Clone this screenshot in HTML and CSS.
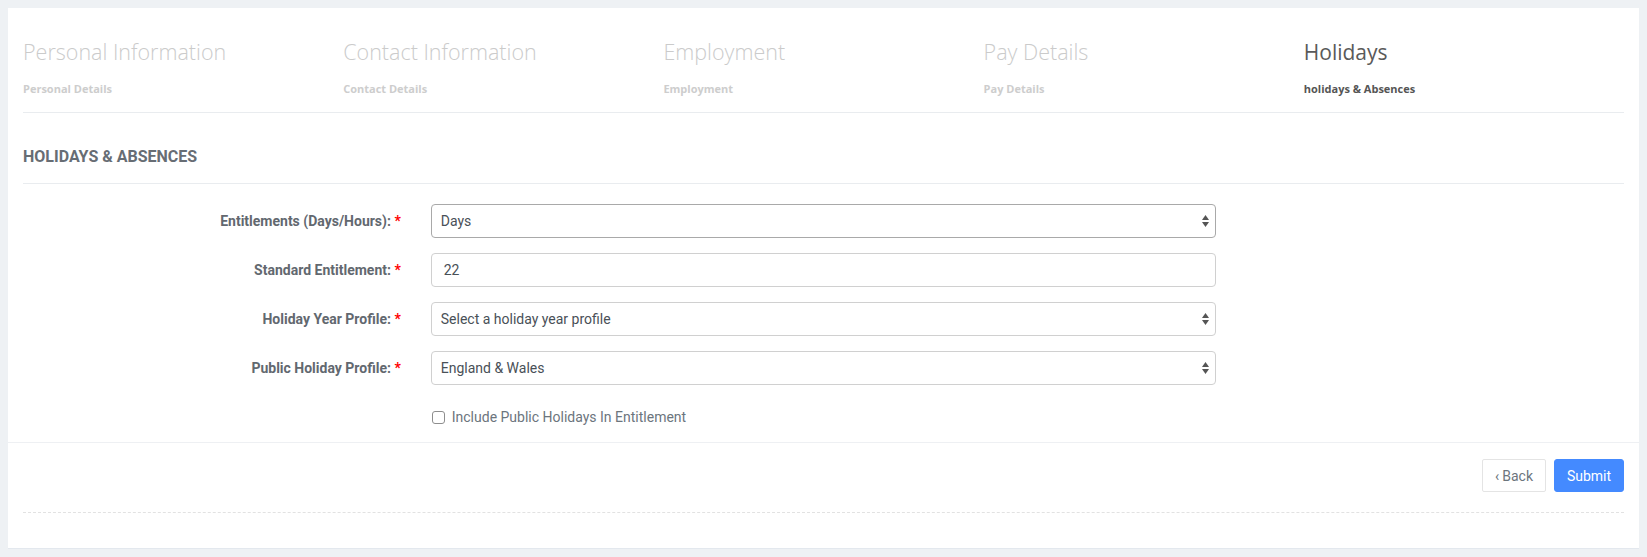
FILE: index.html
```html
<!DOCTYPE html>
<html lang="en">
<head>
<meta charset="utf-8">
<title>Holidays &amp; Absences</title>
<link rel="stylesheet" href="styles.css">
</head>
<body>
<div class="card">
  <div class="steps">
    <div class="step">
      <div class="step-title">Personal Information</div>
      <div class="step-sub">Personal Details</div>
    </div>
    <div class="step">
      <div class="step-title">Contact Information</div>
      <div class="step-sub">Contact Details</div>
    </div>
    <div class="step">
      <div class="step-title">Employment</div>
      <div class="step-sub">Employment</div>
    </div>
    <div class="step">
      <div class="step-title">Pay Details</div>
      <div class="step-sub">Pay Details</div>
    </div>
    <div class="step active">
      <div class="step-title">Holidays</div>
      <div class="step-sub">holidays &amp; Absences</div>
    </div>
  </div>

  <h3 class="section-title">HOLIDAYS &amp; ABSENCES</h3>

  <div class="form">
    <div class="form-row">
      <label class="form-label">Entitlements (Days/Hours): <span class="req">*</span></label>
      <div class="field">
        <div class="select dark">
          <span class="select-text">Days</span>
          <svg class="arrows" width="7" height="12" viewBox="0 0 7 12"><polygon points="0,5 3.5,0 7,5" fill="#555"/><polygon points="0,7 7,7 3.5,12" fill="#555"/></svg>
        </div>
      </div>
    </div>
    <div class="form-row">
      <label class="form-label">Standard Entitlement: <span class="req">*</span></label>
      <div class="field">
        <div class="input">22</div>
      </div>
    </div>
    <div class="form-row">
      <label class="form-label">Holiday Year Profile: <span class="req">*</span></label>
      <div class="field">
        <div class="select">
          <span class="select-text">Select a holiday year profile</span>
          <svg class="arrows" width="7" height="12" viewBox="0 0 7 12"><polygon points="0,5 3.5,0 7,5" fill="#555"/><polygon points="0,7 7,7 3.5,12" fill="#555"/></svg>
        </div>
      </div>
    </div>
    <div class="form-row">
      <label class="form-label">Public Holiday Profile: <span class="req">*</span></label>
      <div class="field">
        <div class="select">
          <span class="select-text">England &amp; Wales</span>
          <svg class="arrows" width="7" height="12" viewBox="0 0 7 12"><polygon points="0,5 3.5,0 7,5" fill="#555"/><polygon points="0,7 7,7 3.5,12" fill="#555"/></svg>
        </div>
      </div>
    </div>
    <div class="form-row check-row">
      <div class="form-label"></div>
      <div class="field">
        <label class="check">
          <input type="checkbox" class="check-box">
          <span>Include Public Holidays In Entitlement</span>
        </label>
      </div>
    </div>
  </div>

  <div class="footer">
    <div class="actions">
      <button class="btn btn-back"><span class="chev">&#8249;</span>Back</button>
      <button class="btn btn-submit">Submit</button>
    </div>
    <div class="dashed"></div>
  </div>
</div>
</body>
</html>
```
FILE: styles.css
```css
html, body {
  margin: 0;
  padding: 0;
}
body {
  background: #eef1f4;
  padding: 8px 8px 8px 8px;
  font-family: Roboto, "Liberation Sans", Arial, sans-serif;
}
.card {
  background: #fff;
  padding: 0 15px;
  border-bottom: 1px solid #e3e8ee;
  box-sizing: border-box;
  height: 541px;
}
.steps {
  display: grid;
  grid-template-columns: repeat(5, 1fr);
  padding-top: 30px;
  padding-bottom: 16px;
  border-bottom: 1px solid #e9ecef;
}
.step-title {
  font-family: "Open Sans", "Noto Sans", sans-serif;
  font-weight: 300;
  font-size: 21.5px;
  line-height: 28px;
  color: #cbcbcb;
}
.step-sub {
  font-family: "Open Sans", "Noto Sans", sans-serif;
  font-weight: 700;
  font-size: 11px;
  line-height: 14px;
  margin-top: 16px;
  color: #cdcdcd;
}
.step.active .step-title { color: #5a5a5a; font-weight: 400; font-size: 21px; }
.step.active .step-sub { color: #555; }

.section-title {
  margin: 0;
  padding: 34px 0 16px;
  font-size: 16px;
  line-height: 20px;
  font-weight: 700;
  color: #676d74;
  border-bottom: 1px solid #e9ecef;
}
.form {
  margin: 20px -15px 0;
}
.form-row {
  display: grid;
  grid-template-columns: 25% 50%;
  margin-bottom: 15px;
  align-items: center;
}
.form-label {
  padding: 0 15px;
  text-align: right;
  font-size: 14px;
  font-weight: 700;
  color: #62686f;
}
.req { color: #ff0000; }
.field {
  padding: 0 15px;
}
.select, .input {
  height: 34px;
  box-sizing: border-box;
  border: 1px solid #d0d0d0;
  border-radius: 4px;
  display: flex;
  align-items: center;
  font-size: 14px;
  color: #495057;
  background: #fff;
}
.select {
  padding: 0 6px 0 9px;
  justify-content: space-between;
}
.select.dark { border-color: #a9a9a9; }
.input { padding: 0 12px; }
.arrows { display: block; }
.check-row {
  margin-top: 22px;
  margin-bottom: 15px;
}
.check {
  display: flex;
  align-items: center;
  gap: 7px;
  font-size: 14px;
  line-height: 20px;
  color: #6c757d;
  padding-left: 1px;
}
.check-box {
  appearance: none;
  -webkit-appearance: none;
  margin: 0;
  width: 13px;
  height: 13px;
  border: 1px solid #8e8e8e;
  border-radius: 3px;
  background: #fff;
}
.footer {
  border-top: 1px solid #eef0f3;
  margin: 0 -15px;
  padding: 16px 15px 0;
}
.actions {
  display: flex;
  justify-content: flex-end;
  gap: 8px;
}
.btn {
  height: 33px;
  box-sizing: border-box;
  font-family: Roboto, "Liberation Sans", Arial, sans-serif;
  font-size: 14px;
  border-radius: 3px;
  padding: 0;
  white-space: nowrap;
  display: flex;
  align-items: center;
  justify-content: center;
}
.btn-back {
  background: #fff;
  border: 1px solid #e4e4e4;
  color: #6c757d;
  width: 64px;
  border-radius: 2px;
}
.chev {
  margin-right: 3px;
}
.btn-submit {
  background: #448aff;
  border: 1px solid #448aff;
  color: #fff;
  width: 70px;
}
.dashed {
  margin-top: 20px;
  border-top: 1px dashed #e2e2e2;
}
```
